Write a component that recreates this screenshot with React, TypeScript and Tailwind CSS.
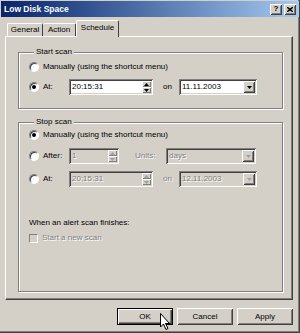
import React from 'react';

const raised =
  'shadow-[inset_1px_1px_0_#ffffff,inset_-1px_-1px_0_#404040,inset_2px_2px_0_#d4d0c8,inset_-2px_-2px_0_#808080]';
const raisedThin = 'shadow-[inset_1px_1px_0_#ffffff,inset_-1px_-1px_0_#808080]';
const sunken =
  'shadow-[inset_1px_1px_0_#808080,inset_-1px_-1px_0_#ffffff,inset_2px_2px_0_#404040,inset_-2px_-2px_0_#d4d0c8]';
const disabledText = 'text-[#808080] [text-shadow:1px_1px_0_#ffffff]';

function Radio({ checked }: { checked?: boolean }) {
  return (
    <div className="w-[10px] h-[10px] rounded-full bg-white border border-t-[#808080] border-l-[#808080] border-b-[#ffffff] border-r-[#ffffff] shadow-[inset_1px_1px_0_#404040] flex items-center justify-center shrink-0">
      {checked && <div className="w-[4px] h-[4px] rounded-full bg-black" />}
    </div>
  );
}

function Arrow({ up, disabled }: { up?: boolean; disabled?: boolean }) {
  return (
    <svg width="5" height="3" viewBox="0 0 5 3">
      <path d={up ? 'M2.5 0 L5 3 L0 3 Z' : 'M0 0 L5 0 L2.5 3 Z'} fill={disabled ? '#a0a0a0' : '#000'} />
    </svg>
  );
}

function SpinBox({ value, width, disabled }: { value: string; width: string; disabled?: boolean }) {
  return (
    <div className={`${width} h-[16px] flex ${sunken} ${disabled ? 'bg-[#d4d0c8]' : 'bg-white'} p-[2px]`}>
      <span className={`flex-1 pl-[1px] leading-[12px] ${disabled ? disabledText : 'text-black'}`}>{value}</span>
      <div className="w-[9px] flex flex-col">
        <div className={`flex-1 bg-[#d4d0c8] ${raisedThin} flex items-center justify-center`}>
          <Arrow up disabled={disabled} />
        </div>
        <div className={`flex-1 bg-[#d4d0c8] ${raisedThin} flex items-center justify-center`}>
          <Arrow disabled={disabled} />
        </div>
      </div>
    </div>
  );
}

function Combo({ value, width, disabled }: { value: string; width: string; disabled?: boolean }) {
  return (
    <div className={`${width} h-[16px] flex ${sunken} ${disabled ? 'bg-[#d4d0c8]' : 'bg-white'} p-[2px]`}>
      <span className={`flex-1 pl-[1px] leading-[12px] ${disabled ? disabledText : 'text-black'}`}>{value}</span>
      <div className={`w-[12px] bg-[#d4d0c8] ${raised} flex items-center justify-center`}>
        <Arrow disabled={disabled} />
      </div>
    </div>
  );
}

function Button({ label, focused }: { label: string; focused?: boolean }) {
  return (
    <div
      className={`w-[56px] h-[17px] bg-[#d4d0c8] flex items-center justify-center text-black ${
        focused
          ? 'border border-black shadow-[inset_1px_1px_0_#ffffff,inset_-1px_-1px_0_#404040,inset_-2px_-2px_0_#808080]'
          : raised
      }`}
    >
      {label}
    </div>
  );
}

export default function App() {
  return (
    <div
      className="w-[300px] h-[333px] bg-[#d4d0c8] text-[8px] leading-[10px] text-black overflow-hidden relative shadow-[inset_-1px_-1px_0_#404040,inset_-2px_-2px_0_#808080]"
      style={{ fontFamily: '"Liberation Sans", Arial, sans-serif' }}
    >
      {/* Title bar */}
      <div className="mt-[1px] mx-[1px] h-[16px] bg-gradient-to-r from-[#0a246a] to-[#a6caf0] flex items-center justify-between pl-[3px] pr-[3px]">
        <span className="text-white font-bold text-[8.5px]">Low Disk Space</span>
        <div className="flex gap-[2px]">
          <div className={`w-[12px] h-[11px] bg-[#d4d0c8] ${raised} flex items-center justify-center font-bold text-[8px] leading-none`}>?</div>
          <div className={`w-[12px] h-[11px] bg-[#d4d0c8] ${raised} flex items-center justify-center`}>
            <svg width="6" height="5" viewBox="0 0 6 5">
              <path d="M0 0 L6 5 M6 0 L0 5" stroke="#000" strokeWidth="1.4" />
            </svg>
          </div>
        </div>
      </div>

      {/* Tabs */}
      <div className="mt-[3px] ml-[7px] h-[16px] flex items-end relative z-10">
        <div className="w-[36px] h-[13px] bg-[#d4d0c8] border-t border-l border-white border-r border-r-[#404040] rounded-t-[2px] flex items-center justify-center">
          General
        </div>
        <div className="w-[33px] h-[13px] bg-[#d4d0c8] border-t border-white border-r border-r-[#404040] rounded-t-[2px] flex items-center justify-center">
          Action
        </div>
        <div className="w-[43px] h-[17px] -mb-[1px] bg-[#d4d0c8] border-t border-l border-white border-r border-r-[#404040] rounded-t-[2px] flex items-start pt-[2px] justify-center">
          Schedule
        </div>
      </div>

      {/* Panel */}
      <div className="ml-[5px] w-[288px] h-[264px] border-t border-l border-white border-r border-b border-r-[#404040] border-b-[#404040] shadow-[inset_-1px_-1px_0_#808080] pl-[12px] pt-[10px]">
        <fieldset className="w-[265px] h-[62px] border border-[#808080] shadow-[1px_1px_0_#ffffff,inset_1px_1px_0_#ffffff] pl-[10px] pt-[4px]">
          <legend className="ml-[5px] px-[2px] bg-[#d4d0c8] leading-[10px]">Start scan</legend>
          <div className="h-[12px] flex items-center gap-[4px]">
            <Radio />
            <span>Manually (using the shortcut menu)</span>
          </div>
          <div className="mt-[6px] flex items-center">
            <Radio checked />
            <span className="ml-[4px] w-[26px]">At:</span>
            <SpinBox value="20:15:31" width="w-[84px]" />
            <span className="ml-[10px] w-[16px]">on</span>
            <Combo value="11.11.2003" width="w-[78px]" />
          </div>
        </fieldset>

        <fieldset className="mt-[8px] w-[265px] h-[175px] border border-[#808080] shadow-[1px_1px_0_#ffffff,inset_1px_1px_0_#ffffff] pl-[10px] pt-[2px]">
          <legend className="ml-[5px] px-[2px] bg-[#d4d0c8] leading-[10px]">Stop scan</legend>
          <div className="h-[12px] flex items-center gap-[4px]">
            <Radio checked />
            <span>Manually (using the shortcut menu)</span>
          </div>
          <div className="mt-[7px] flex items-center">
            <Radio />
            <span className="ml-[4px] w-[26px]">After:</span>
            <SpinBox value="1" width="w-[50px]" disabled />
            <span className={`ml-[16px] w-[31px] ${disabledText}`}>Units:</span>
            <Combo value="days" width="w-[90px]" disabled />
          </div>
          <div className="mt-[7px] flex items-center">
            <Radio />
            <span className="ml-[4px] w-[26px]">At:</span>
            <SpinBox value="20:15:31" width="w-[84px]" disabled />
            <span className={`ml-[10px] w-[16px] ${disabledText}`}>on</span>
            <Combo value="12.11.2003" width="w-[78px]" disabled />
          </div>
          <div className="mt-[31px] leading-[10px]">When an alert scan finishes:</div>
          <div className="mt-[5px] h-[10px] flex items-center gap-[4px]">
            <div className="w-[9px] h-[9px] bg-[#d4d0c8] border border-t-[#808080] border-l-[#808080] border-b-white border-r-white" />
            <span className={disabledText}>Start a new scan</span>
          </div>
        </fieldset>
      </div>

      {/* Buttons */}
      <div className="mt-[8px] ml-[117px] flex gap-[4px]">
        <Button label="OK" focused />
        <Button label="Cancel" />
        <Button label="Apply" />
      </div>

      {/* Mouse cursor */}
      <svg className="absolute left-[160px] top-[313px]" width="11" height="18" viewBox="0 0 11 18">
        <path d="M0.5 0.5 L0.5 14 L3.5 11 L6 16.5 L8 15.5 L5.5 10.5 L9.5 10.5 Z" fill="#fff" stroke="#000" strokeWidth="1" />
      </svg>
    </div>
  );
}
